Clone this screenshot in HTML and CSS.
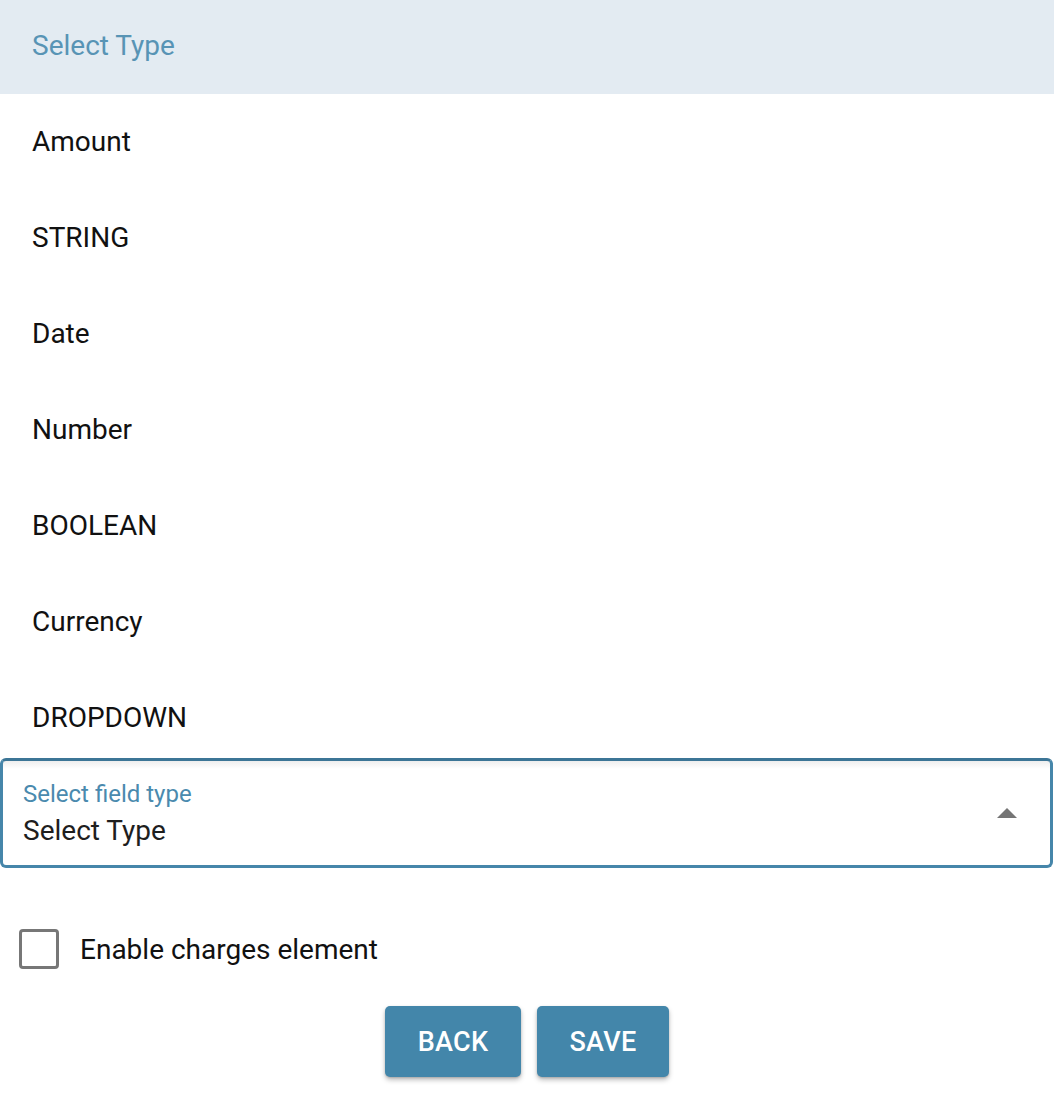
FILE: index.html
```html
<!DOCTYPE html>
<html>
<head>
<meta charset="utf-8">
<link rel="stylesheet" href="styles.css">
</head>
<body>
<div class="page">
  <ul class="menu">
    <li class="menu-item menu-header">Select Type</li>
    <li class="menu-item">Amount</li>
    <li class="menu-item">STRING</li>
    <li class="menu-item">Date</li>
    <li class="menu-item">Number</li>
    <li class="menu-item">BOOLEAN</li>
    <li class="menu-item">Currency</li>
    <li class="menu-item">DROPDOWN</li>
  </ul>
  <div class="select">
    <div class="select-text">
      <div class="select-label">Select field type</div>
      <div class="select-value">Select Type</div>
    </div>
    <span class="select-arrow"></span>
  </div>
  <label class="check-row">
    <span class="checkbox"></span>
    <span class="check-label">Enable charges element</span>
  </label>
  <div class="actions">
    <button class="btn btn-back">BACK</button>
    <button class="btn btn-save">SAVE</button>
  </div>
</div>
</body>
</html>
```

FILE: styles.css
```css
html, body {
  margin: 0;
  padding: 0;
  background: #ffffff;
}
body {
  font-family: Roboto, "Liberation Sans", Arial, sans-serif;
  width: 1054px;
  height: 1110px;
  overflow: hidden;
}
.page {
  display: flex;
  flex-direction: column;
}
.menu {
  list-style: none;
  margin: 0;
  padding: 0;
  background: #ffffff;
  position: relative;
  z-index: 1;
}
.menu-item {
  height: 96px;
  box-sizing: border-box;
  display: flex;
  align-items: center;
  padding-left: 32px;
  padding-bottom: 2px;
  font-size: 28px;
  line-height: 33px;
  color: #111111;
}
.menu-header {
  height: 94px;
  background: #e3ebf2;
  color: #5894b5;
  padding-bottom: 4px;
}
.select {
  height: 110px;
  box-sizing: border-box;
  margin-top: -8px;
  border: 3px solid #4686aa;
  border-top-color: #3c7596;
  border-radius: 6px;
  margin-right: 1px;
  display: flex;
  align-items: center;
  justify-content: space-between;
  padding: 0 33px 0 20px;
  background: linear-gradient(to bottom, #eeeeee 0, #ffffff 8px);
  position: relative;
  z-index: 2;
}
.select-text {
  display: flex;
  flex-direction: column;
  gap: 6px;
  align-self: flex-start;
  padding-top: 19px;
}
.select-label {
  font-size: 24px;
  line-height: 28px;
  color: #4a8aae;
}
.select-value {
  font-size: 28px;
  line-height: 33px;
  color: #1e1e1e;
}
.select-arrow {
  width: 0;
  height: 0;
  border-left: 10px solid transparent;
  border-right: 10px solid transparent;
  border-bottom: 10px solid #757575;
}
.check-row {
  display: flex;
  align-items: center;
  gap: 21px;
  margin: 61px 0 0 19px;
}
.checkbox {
  width: 34px;
  height: 34px;
  border: 3px solid #777777;
  border-radius: 4px;
  box-sizing: content-box;
}
.check-label {
  font-size: 28px;
  line-height: 33px;
  color: #111111;
}
.actions {
  display: flex;
  justify-content: center;
  gap: 16px;
  margin-top: 37px;
}
.btn {
  height: 71px;
  border: none;
  border-radius: 5px;
  background: #4386aa;
  color: #ffffff;
  font-family: Roboto, "Liberation Sans", Arial, sans-serif;
  font-size: 27px;
  font-weight: 500;
  letter-spacing: 0.3px;
  box-shadow: 0 3px 5px rgba(0,0,0,0.25), 0 1px 2px rgba(0,0,0,0.15);
  padding: 0;
}
.btn-back {
  width: 136px;
}
.btn-save {
  width: 132px;
}
```
